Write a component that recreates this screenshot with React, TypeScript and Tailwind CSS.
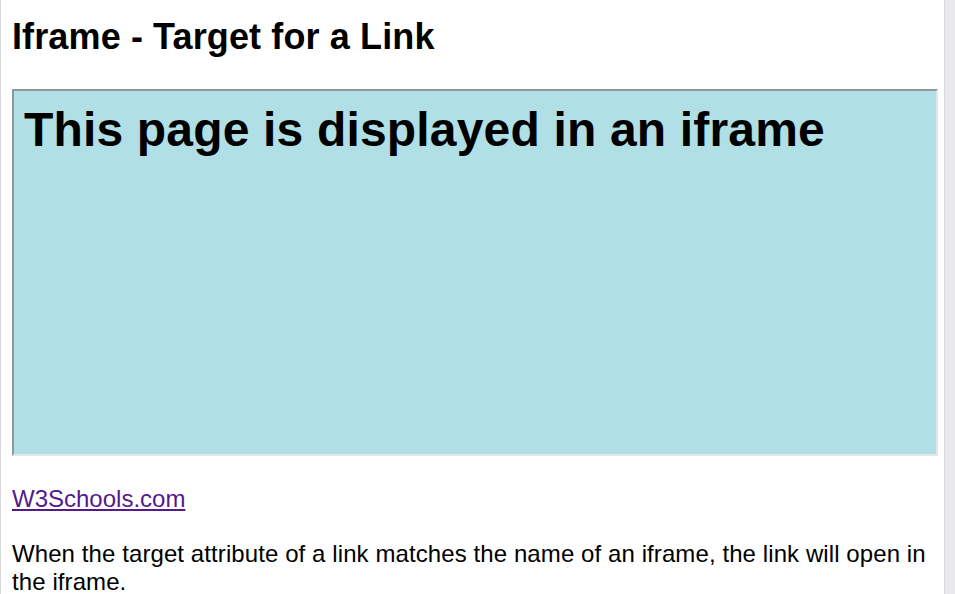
const App = () => {
  return (
    <div className="flex h-[594px] w-[955px] overflow-hidden bg-white font-['Liberation_Sans',Arial,sans-serif] text-black">
      <div className="w-px bg-[#d6d6d6]" />
      <div className="flex-1 pl-[11px]">
        <h2 className="mt-[16px] text-[36px] font-bold leading-[41px] tracking-[0.12px]">Iframe - Target for a Link</h2>
        <div className="mt-[32px] h-[367px] w-[926px] border-2 border-t-[#8e9899] border-l-[#8e9899] border-r-[#e2e6e7] border-b-[#e2e6e7] bg-[#b0e0e6] pl-[10px] pt-[11px]">
          <h1 className="text-[48px] font-bold leading-[55px] tracking-[0.17px]">This page is displayed in an iframe</h1>
        </div>
        <p className="mt-[29px] text-[24px] leading-[28px]">
          <a href="#" className="text-[#551a8b] underline">
            W3Schools.com
          </a>
        </p>
        <p className="mt-[27px] w-[922px] text-[24px] leading-[28px] tracking-[0.09px]">
          When the target attribute of a link matches the name of an iframe, the link will open in the iframe.
        </p>
      </div>
      <div className="w-[11px] border-l border-[#d9d9d9] bg-[#e9e9eb]" />
    </div>
  );
};

export default App;
